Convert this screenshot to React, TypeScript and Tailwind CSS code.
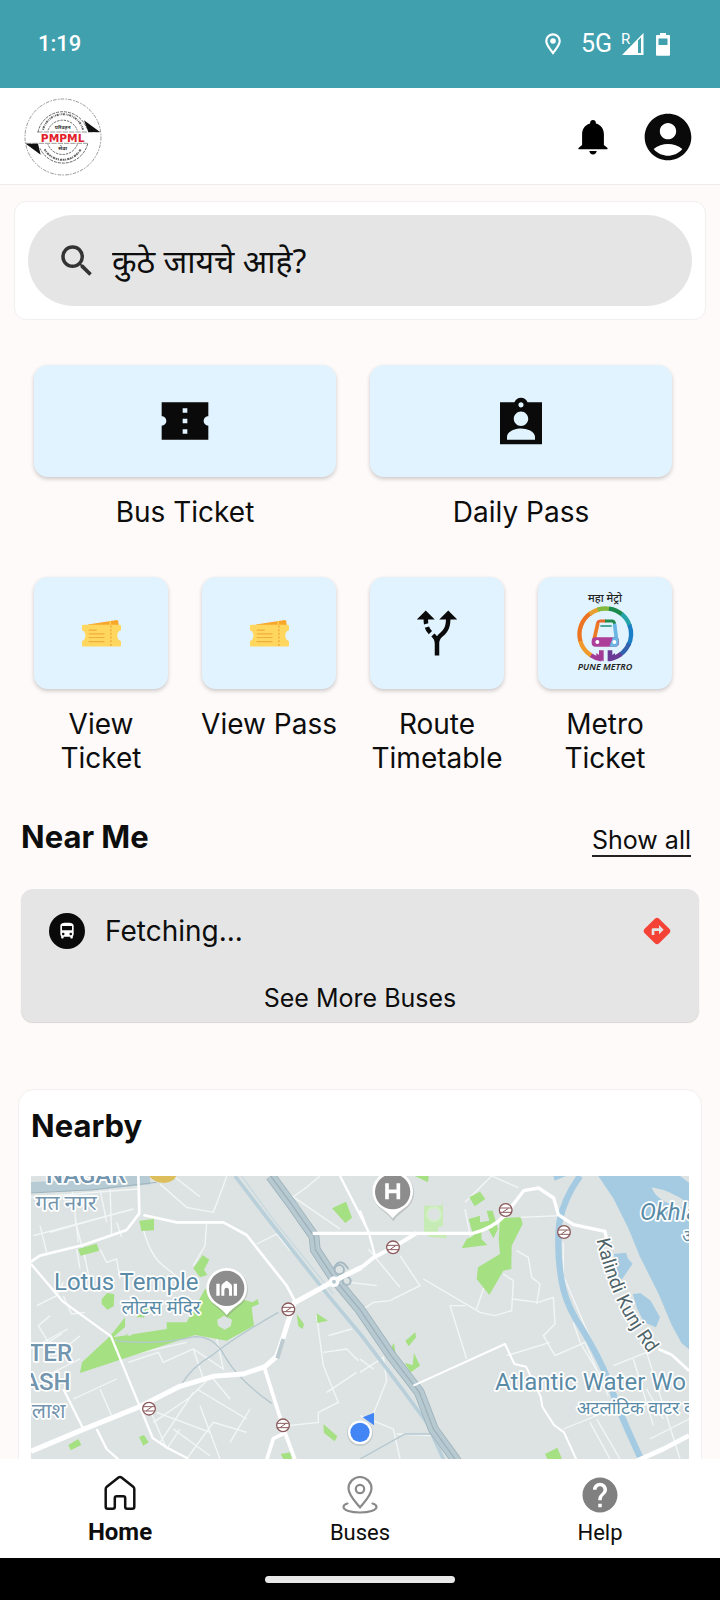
import React from 'react';
import { MdAccountCircle, MdAltRoute, MdDirections, MdDirectionsBus, MdHelp, MdSearch } from 'react-icons/md';

const BusTicketIcon = () => (
  <svg viewBox="0 0 24 24" className="w-14 h-14" fill="#0a0a0a" aria-hidden="true">
    <path d="M22 10V4H2v6c1.1 0 2 .9 2 2s-.9 2-2 2v6h20v-6c-1.1 0-2-.9-2-2s.9-2 2-2zm-9 7.5h-2v-2h2v2zm0-4.5h-2v-2h2v2zm0-4.5h-2v-2h2v2z" />
  </svg>
);

const DailyPassIcon = () => (
  <svg viewBox="0 -1 24 24" className="w-14 h-14" fill="#0a0a0a" aria-hidden="true">
    <path
      fillRule="evenodd"
      d="M21 3h-6.180C14.400 1.840 13.300 1 12 1s-2.400.840-2.820 2H3v18h18V3zm-9 0c.600 0 1.100.5 1.100 1.100S12.600 5.200 12 5.200s-1.100-.5-1.100-1.100S11.400 3 12 3zm0 3.900c1.700 0 3.100 1.400 3.100 3.100s-1.400 3.100-3.100 3.100-3.100-1.400-3.100-3.100 1.400-3.100 3.100-3.100zM12 14.200c-2.500 0-6 1.200-6 3.600V19h12v-1.200c0-2.400-3.500-3.600-6-3.600z"
    />
  </svg>
);

const YellowTicketIcon = () => (
  <svg viewBox="0 0 116 80" className="w-[39px] h-[27px]" aria-hidden="true">
    <path d="M18 13 L104 0 Q108 0 108 5 L109 15 L18 15z" fill="#f9a62b" />
    <path d="M84 2v12" stroke="#ffd75e" strokeWidth="4" />
    <path
      d="M4 14h108q4 0 4 4v12q-11 3-11 16t11 16v13q0 4-4 4H4q-4 0-4-4V62q10-3 10-16T0 30V18q0-4 4-4z"
      fill="#ffd75e"
    />
    <path d="M20 30h24M20 41h47M20 52h47M20 64h47" stroke="#efae3c" strokeWidth="3.5" />
    <path d="M86 16v63" stroke="#ef9f35" strokeWidth="3.5" strokeDasharray="6 5" />
  </svg>
);

const PuneMetroLogo = () => (
  <svg viewBox="0 0 168 240" className="w-14 h-20 overflow-visible" role="img" aria-label="Pune Metro">
    <text x="84" y="28" textAnchor="middle" fontSize="33" fontStyle="italic" fontWeight="500" fill="#222" className="font-['Noto_Sans',sans-serif]">
      महा मेट्रो
    </text>
    <g fill="none" strokeWidth="13">
      <path d="M74 199A77 77 0 0 1 40 186" stroke="#a33a96" />
      <path d="M42 187A77 77 0 0 1 9 141" stroke="#f09a2b" />
      <path d="M10 144A77 77 0 0 1 42 60" stroke="#ec7423" />
      <path d="M38 63A77 77 0 0 1 66 49" stroke="#e9a02e" />
      <path d="M62 50A77 77 0 0 1 100 48" stroke="#83b93c" />
      <path d="M96 47A77 77 0 0 1 137 66" stroke="#1d8a4e" />
      <path d="M134 63A77 77 0 0 1 158 98" stroke="#25a3a8" />
      <path d="M157 95A77 77 0 0 1 154 157" stroke="#1a7fc4" />
      <path d="M156 151A77 77 0 0 1 128 186" stroke="#3262ae" />
      <path d="M132 183A77 77 0 0 1 94 199" stroke="#6b3a97" />
    </g>
    <path d="M80 205V172H66V186L58 180V196z" fill="#a33a96" />
    <path d="M92 205V172H106V186L114 180V196z" fill="#6b3a97" />
    <path d="M62 93 L51 141" stroke="#ec7a25" strokeWidth="11" strokeLinecap="round" fill="none" />
    <path d="M113 95 L119 143" stroke="#69b5e3" strokeWidth="11" strokeLinecap="round" fill="none" />
    <path d="M61 90q3-6 9-6h17" stroke="#e9672b" strokeWidth="9" fill="none" />
    <path d="M84 84h22q5 0 7 8" stroke="#218b4c" strokeWidth="9" fill="none" />
    <path d="M70 99h34" stroke="#2f9a87" strokeWidth="5" />
    <rect x="44" y="133" width="82" height="28" rx="12" fill="#ad3f9b" />
    <path d="M97 161l11-28h10q8 0 7 16-1 12-11 12z" fill="#69b5e3" />
    <circle cx="61" cy="147" r="6" fill="#fff" />
    <circle cx="112" cy="147" r="6" fill="#fff" />
    <text x="84" y="230" textAnchor="middle" fontSize="27" fontStyle="italic" fontWeight="600" fill="#222" className="font-['Noto_Sans',sans-serif]">
      PUNE METRO
    </text>
  </svg>
);

const PmpmlLogo = () => (
  <svg viewBox="0 0 234 234" className="w-[78px] h-[78px]" role="img" aria-label="PMPML">
    <g fill="none" stroke="#666">
      <circle cx="117" cy="117" r="114" strokeWidth="2" strokeDasharray="11 4 5 3" />
      <path d="M42 103A76 76 0 0 1 188 91M191 137A76 76 0 0 1 48 151" strokeWidth="3" strokeDasharray="9 3" />
      <path d="M72 97A47 47 0 0 1 160 97M160 139A47 47 0 0 1 72 139" strokeWidth="3" strokeDasharray="7 3" />
      <path d="M57 95A62 62 0 0 1 177 95" strokeWidth="6" strokeDasharray="3 2 6 3 2 3" />
      <path d="M62 154A62 62 0 0 0 170 154" strokeWidth="6" strokeDasharray="5 2 3 3 7 2" />
      <path d="M40 102h188M6 136h185" strokeWidth="2" strokeDasharray="16 3" />
    </g>
    <path d="M180 67l48 35h-35z" fill="#111" />
    <path d="M5 137h37l8 33z" fill="#111" />
    <text x="116" y="93" textAnchor="middle" fontSize="15" fontWeight="700" fill="#333" className="font-['Noto_Sans',sans-serif]">
      परिवहन
    </text>
    <text x="116" y="131" textAnchor="middle" fontSize="32" fontWeight="700" fill="#e3202b" className="font-['DejaVu_Sans',sans-serif]">
      PMPML
    </text>
    <text x="116" y="156" textAnchor="middle" fontSize="16" fontWeight="700" fill="#333" className="font-['Noto_Sans',sans-serif]">
      सेवा
    </text>
  </svg>
);

const BellIcon = () => (
  <svg viewBox="0 0 30 36" className="w-[30px] h-9" fill="#000" aria-hidden="true">
    <path d="M15 1c1.700 0 2.900 1.200 2.900 2.900v.7c4.800 1.200 8 5.400 8 10.800V26l3.300 2.700c.8.700.5 1.600-.4 1.600H1.200c-.9 0-1.200-.9-.4-1.600L4.100 26V15.400c0-5.400 3.200-9.600 8-10.800v-.7C12.100 2.200 13.300 1 15 1z" />
    <path d="M11.300 32h7.400c-.2 2-1.700 3.400-3.700 3.400S11.500 34 11.300 32z" />
  </svg>
);

const HomeIcon = () => (
  <svg viewBox="0 0 32 36" className="w-8 h-9" fill="none" stroke="#111" strokeWidth="2.5" strokeLinejoin="round" aria-hidden="true">
    <path d="M14.500 2.600 2.800 11.800q-1.100.9-1.100 2.300v17.600q0 2 2 2h5.100q2 0 2-2v-8.500q0-2 2-2h6.400q2 0 2 2v8.500q0 2 2 2h5.100q2 0 2-2V14.100q0-1.400-1.100-2.300L17.500 2.600q-1.500-1.200-3 0z" />
  </svg>
);

const BusesIcon = () => (
  <svg viewBox="0 0 36 38" className="w-9 h-[38px]" fill="none" stroke="#8a8a8a" strokeWidth="2.2" strokeLinecap="round" strokeLinejoin="round" aria-hidden="true">
    <path d="M18 31.500C13.500 26 6.500 19 6.500 12.500a11.500 11.500 0 0 1 23 0c0 6.500-7 13.500-11.500 19z" />
    <circle cx="18" cy="13" r="4.2" />
    <path d="M5.500 27.500C3 28 1.500 29.600 1.500 31c0 3.200 7.500 5.500 16.500 5.500s16.500-2.300 16.500-5.500c0-1.400-1.500-3-4-3.500" />
  </svg>
);

// Metro stations on the map
const stations = [
  [865, 721], [447, 1019], [849, 1069], [1179, 535], [1517, 423], [1692, 489],
];

const parks = [
  '418,455 462,450 462,484 424,486', '234,540 290,524 298,545 242,560',
  '305,690 322,672 343,676 341,712 322,722 305,705',
  '580,598 608,558 628,572 612,602 622,618 600,625',
  '996,418 1038,398 1056,446 1036,462', '890,735 912,765 908,780 895,772',
  '950,733 984,755 952,762', '205,1128 235,1110 244,1128 212,1144',
  '417,1104 432,1098 446,1120 430,1130', '970,1065 1012,1102 1004,1117 972,1092',
  '842,1155 870,1150 876,1170 850,1170', '1245,321 1286,321 1284,340',
  '1408,385 1440,368 1456,390 1424,412', '1406,450 1440,440 1440,460 1468,455 1460,425 1478,425 1494,480 1480,508 1465,480 1445,480 1444,510 1462,528 1385,538 1400,510 1420,500',
  '1216,815 1246,790 1248,805 1226,832', '1170,840 1182,822 1188,862',
  '1214,882 1238,888 1242,852 1260,890 1232,910', '1635,1155 1672,1136 1690,1180 1645,1175',
  '340,805 500,780 500,760 560,760 615,660 758,700 772,690 777,705 755,715 762,770 680,815 585,798 520,820 240,912 246,880 330,802 375,745 380,800 405,790 460,700',
  '1500,447 1562,445 1568,465 1535,530 1534,600 1510,605 1468,678 1430,630 1434,595 1500,555 1496,510',
];

const sideStreets = [
  'M120 470l20 80M150 490l210-60M215 350l20 170M300 360l20 100M330 350l5 150M93 385l320-25M350 460l15 45M225 450l30 120M240 600l-10 -60M250 540l20 100M300 540l20 40 30-10 10 60M100 500l300-80',
  'M430 480q20 80 60 110l50 40M620 460l-5 70-35 60M480 345l80 70 80 15 30-80 10-29M520 321l80 62M770 525l60-30 40 50M870 390l50-35 40-34M860 370l160 110',
  'M150 740l-35 30 30 50 40-25M190 640l-20 40-60 30M190 680l25 55 40-5M93 840l110-60M240 800l-60 50M240 870l-100 50',
  'M380 860l180-40M385 880l90-30 15 30 90-40 30 90M580 840l90 60-20-90M350 930l-130 60M300 960l35 80M440 1000l60 140M460 1060l110-75 50-50M480 1120l100-150M520 1080l110 80M560 1170l80-110 100 30M590 960l150 90M640 930l50 60M600 1010l60 160M750 1020l-60 100M470 1030l160 60M500 1140l40-60',
  'M950 740l20 150 45 110-60 30v30l-90 10M970 850l70-10 35 35M980 970l90-60M985 800l70-20',
  'M1105 540l95 115M1200 560l60 90-90 45-50 5-30 20M1270 630l170 100 45 10 50-15 5-90-30-20M1350 710l50 160M1350 710h45M1395 420l20 100M1395 400l80-79 80 35M1550 545l35 20 10 60 25 20-10 60M1535 690l80 10 45-15 5 80-35 35 35 60 90-40 70 160M1430 720l20-60 35-30M1560 445l120-5',
  'M1690 520v100l60 140 110 260 70 150M1720 760l20 60 60 100M1520 860l130-40M1840 890l100-40 100 320M1900 870l60 200M1690 1080l150-60M1770 1060l60 110M1790 1050l70 120M1990 1050l-50-90M1950 1110l117-60',
  'M1080 910l70-45 10 70-40 100M1080 1040l100 40 20 90M1080 870l40 30M1190 1095l110 5M1050 640l80 10',
];

const MapPin = ({ x, y, children }: { x: number; y: number; children: React.ReactNode }) => (
  <g transform={`translate(${x} ${y})`}>
    <path d="M0 84C-10 68-26 58-44 42A62 62 0 1 1 44 42C26 58 10 68 0 84z" fill="#8b8b8b" opacity=".35" transform="translate(2 5)" />
    <path d="M0 80C-10 66-26 56-44 42A61 61 0 1 1 44 42C26 56 10 66 0 80z" fill="#fff" />
    <circle r="53" fill="#8d8d8d" />
    {children}
  </g>
);

const NearbyMap = () => (
  <svg viewBox="93 321 1974 900" preserveAspectRatio="xMidYMin slice" className="block w-full h-[300px] bg-[#dde3e3]" role="img" aria-label="Map of nearby places">
    <g fill="none" stroke="#f3f6f6" strokeWidth="4">
      {sideStreets.map(d => <path key={d} d={d} />)}
    </g>
    <g fill="#a5e082">
      {parks.map(points => <polygon key={points} points={points} />)}
    </g>
    <path d="M1272 410h52l5-10v70l-15 5v20h-42zM1285 490h54v18l-54-5z" fill="#c6ebb4" />
    <circle cx="1302" cy="436" r="21" fill="#dde3e3" stroke="#d3efc5" strokeWidth="6" />
    <path d="M375 745l55 0 8 25-50 32-12-12z" fill="#dde3e3" />
    <path d="M652 752l20-12 24 12-4 20-18 10-20-12z" fill="#dde3e3" />

    {/* Water */}
    <g fill="#a5cbe2">
      <path d="M1795 321h245l27 20v500l-22-18-30-55-40-95-55-110-35-85-45-90z" />
      <path d="M1660 321h38l-34 14zM1842 555l36-4 6 18 14 15-33 48-16-18zM1898 675l24-2 30 22 28 50-12 30-36-15-20-40z" />
      <path d="M1740 321q-50 70-62 140-10 100 12 200 15 60 60 125 70 120 90 190 20 60 95 220" fill="none" stroke="#a5cbe2" strokeWidth="19" />
    </g>
    <path d="M1955 355q60 10 112 50v14q-40-5-75-22-30-18-37-42z" fill="#dde3e3" />

    {/* Railway and expressway */}
    <g fill="none">
      <path d="M93 355 280 348 450 330" stroke="#b7cbd4" strokeWidth="32" />
      <path d="M93 372 280 362 470 340" stroke="#9fb4be" strokeWidth="3" />
      <path d="M705 321 800 445 985 680 1085 800 1210 965 1280 1060 1330 1170 1350 1221" stroke="#b9d0db" strokeWidth="11" />
      <path d="M725 321 815 445 1000 675" stroke="#c9d9e0" strokeWidth="4" />
      <path d="M345 815q120 15 240-12 60 0 90 60 40 70 140 140M545 945q30-50 90-85 60-50 200-130M1080 1170l135-75 80 0" stroke="#b5c7cf" strokeWidth="4" />
      <path d="M812 321 872 402 942 502 946 542 1002 628 1080 722 1175 862 1258 970 1300 1080 1365 1170 1395 1221" stroke="#9db0b9" strokeWidth="32" />
      <path d="M812 321 872 402 942 502 946 542 1002 628 1080 722 1175 862 1258 970 1300 1080 1365 1170 1395 1221" stroke="#b8cad1" strokeWidth="27" />
      <path d="M812 321 872 402 942 502 946 542 1002 628 1080 722 1175 862 1258 970 1300 1080 1365 1170 1395 1221" stroke="#9fb2bb" strokeWidth="4" />
      <g stroke="#a7bac3" strokeWidth="6">
        <circle cx="1018" cy="602" r="14" />
        <circle cx="1040" cy="636" r="12" />
        <path d="M1000 600q20-40 45 0M975 650l-25 20" />
      </g>
    </g>

    {/* Main roads */}
    <g fill="none" stroke="#fff" strokeLinejoin="round">
      <path d="M93 1147 250 1081 412 1016 540 952 640 922 730 915 795 893 830 862 848 810 882 702 1002 636 1085 595" strokeWidth="15" />
      <path d="M1085 595 1120 566 1185 532 1250 492" strokeWidth="12" />
      <path d="M850 810 832 868" stroke="#bccbd0" strokeWidth="12" />
      <path d="M938 493h480q60-15 95-52l58-76 45-8 45 30 14 50 45 30 95 20 5 25" strokeWidth="10" />
      <path d="M415 321l3 112-38 50-130 45-130 32-27 18M430 438l100 22h140l70 38 120 152 24 45" strokeWidth="8" />
      <path d="M93 585l95 112 145 105 80 195 45 110 45 30 62 32M190 960l60 120M290 1080l30 60 45 40" strokeWidth="7" />
      <path d="M793 895l58 185 35 95M852 1093l-32 16-22 70" strokeWidth="11" />
      <path d="M1020 321l85 165 20 75M1080 425l25 65" strokeWidth="7" />
      <path d="M1240 950l275-125 28 60 35 8 44 90 5 30 35 55 30 22 50 110" strokeWidth="6" />
      <path d="M1975 840l40 17 52 48" strokeWidth="8" />
      <path d="M1900 1180l90-40 77-40" strokeWidth="14" />
    </g>
    <circle cx="1002" cy="638" r="16" fill="#fff" />
    <circle cx="1002" cy="638" r="6" fill="#b8cad1" />

    {stations.map(([x, y]) => (
      <g key={`${x}-${y}`} transform={`translate(${x} ${y})`} fill="none" stroke="#8b5a5c" strokeWidth="3">
        <circle r="19" fill="#fff" strokeWidth="4" />
        <path d="M-18-6H17M-17 7H18M8-5L-8 6" />
      </g>
    ))}

    <path d="M447 321h82q-8 18-38 21-30-3-44-21z" fill="#dcbf5c" />

    <MapPin x={1178} y={368}>
      <path d="M-17-25V23M17-25V23M-17-1H17" stroke="#fff" strokeWidth="11" />
    </MapPin>
    <MapPin x={680} y={658}>
      <path d="M-31-14h10v36h-10zM21-14h10v36H21zM-16-5Q-16-13-6-18 0-28 6-18 16-13 16-5V22H7V7Q7-2 0-2T-7 7V22h-9z" fill="#fff" />
    </MapPin>

    {/* Current location */}
    <path d="M1088 1045l34-14v38z" fill="#4285f4" />
    <circle cx="1080" cy="1092" r="39" fill="#aab3b5" opacity=".5" />
    <circle cx="1080" cy="1090" r="36" fill="#fff" />
    <circle cx="1080" cy="1090" r="29" fill="#4285f4" />

    <g
      className="font-[Roboto,'Noto_Sans',sans-serif]"
      fill="#5a8ba6"
      stroke="#fff"
      strokeWidth="10"
      strokeLinejoin="round"
      paintOrder="stroke"
    >
      <g fill="#7395ae">
        <text x="138" y="341" fontSize="72" fontWeight="500">NAGAR</text>
        <text x="290" y="424" fontSize="63" textAnchor="end">गत नगर</text>
        <text x="216" y="877" fontSize="72" fontWeight="500" textAnchor="end">TER</text>
        <text x="212" y="962" fontSize="72" fontWeight="500" textAnchor="end">ASH</text>
        <text x="197" y="1048" fontSize="63" textAnchor="end">लाश</text>
      </g>
      <text x="162" y="662" fontSize="72">Lotus Temple</text>
      <text x="602" y="734" fontSize="57" textAnchor="end">लोटस मंदिर</text>
      <text x="1485" y="964" fontSize="72">Atlantic Water Wo</text>
      <text x="1730" y="1034" fontSize="54">अटलांटिक वाटर व</text>
      <text x="1920" y="453" fontSize="72" fontStyle="italic">Okhla</text>
      <text x="2046" y="520" fontSize="54" fontStyle="italic">ओ</text>
      <path id="kalindi" d="M1790 512Q1808 600 1848 690T1990 910" fill="none" stroke="none" />
      <text fontSize="57" fill="#4f6469">
        <textPath href="#kalindi">Kalindi Kunj Rd</textPath>
      </text>
    </g>
  </svg>
);

const mainServices = [
  { name: 'Bus Ticket', icon: <BusTicketIcon /> },
  { name: 'Daily Pass', icon: <DailyPassIcon /> },
];

const services = [
  { name: 'View Ticket', icon: <YellowTicketIcon /> },
  { name: 'View Pass', icon: <YellowTicketIcon /> },
  { name: 'Route Timetable', icon: <MdAltRoute className="w-[54px] h-[54px] text-[#0a0a0a]" /> },
  { name: 'Metro Ticket', icon: <PuneMetroLogo /> },
];

const ServiceTile = ({ name, icon }: { name: string; icon: React.ReactNode }) => (
  <button className="flex flex-col items-center">
    <span className="self-stretch mx-[17px] h-28 flex items-center justify-center rounded-[14px] bg-[#e1f3fe] shadow-[0_2px_4px_rgba(0,0,0,0.2)]">
      {icon}
    </span>
    <span className="mt-[18px] px-3 text-[28px] leading-[34px]">{name}</span>
  </button>
);

const StatusBar = () => (
  <div className="h-[88px] shrink-0 bg-[#40a0ae] text-white flex items-center justify-between pl-[38px] pr-[50px]">
    <span className="font-[Roboto,sans-serif] text-[22px] leading-8 font-medium">1:19</span>
    <div className="flex items-center">
      <svg viewBox="0 0 16 22" className="w-4 h-[22px]" aria-hidden="true">
        <path d="M8 20C5 16 1.300 12 1.300 8a6.700 6.700 0 0 1 13.400 0c0 4-3.700 8-6.700 12z" fill="none" stroke="#fff" strokeWidth="2.2" />
        <circle cx="8" cy="8" r="2.8" fill="#fff" />
      </svg>
      <span className="ml-5 font-[Roboto,sans-serif] text-[25px] leading-8">5G</span>
      <svg viewBox="0 0 24 24" className="ml-2 w-6 h-6 overflow-visible" aria-hidden="true">
        <path fillRule="evenodd" d="M23.500 1v22H2zM18 8.500V21h3V5.500z" fill="#fff" />
        <text x="1" y="12" fontSize="15" fill="#fff" stroke="#40a0ae" strokeWidth="1" paintOrder="stroke" className="font-[Roboto,sans-serif]">R</text>
      </svg>
      <svg viewBox="0 0 14 24" className="ml-3 w-3.5 h-6" aria-hidden="true">
        <path fillRule="evenodd" d="M4 1h6v2h3q1 0 1 1v19q0 .8-1 .8H1q-1 0-1-.8V4q0-1 1-1h3zM2.500 6.500V13h9V6.500z" fill="#fff" />
      </svg>
    </div>
  </div>
);

export default function App() {
  return (
    <div className="h-screen flex flex-col bg-[#fefaf9] text-[#0d0d0d] font-[Inter,'Noto_Sans',sans-serif]">
      <StatusBar />

      <header className="h-[97px] shrink-0 bg-white border-b border-[#ececec] pt-0.5 px-6 flex items-center justify-between">
        <PmpmlLogo />
        <div className="flex items-center gap-8">
          <button aria-label="Notifications">
            <BellIcon />
          </button>
          <button aria-label="Profile">
            <MdAccountCircle className="w-14 h-14 text-[#0a0a0a]" />
          </button>
        </div>
      </header>

      <main className="flex-1 min-h-0 overflow-y-auto [scrollbar-width:none]">
        {/* Search */}
        <div className="mx-[14px] mt-4 p-[13px] rounded-xl bg-white border border-[#f1efef]">
          <label className="h-[91px] flex items-center rounded-full bg-[#e5e5e5] pl-7 pr-8">
            <MdSearch className="w-[42px] h-[42px] shrink-0 text-[#333]" />
            <input
              type="text"
              aria-label="Search destination"
              placeholder="कुठे जायचे आहे?"
              className="ml-3.5 flex-1 min-w-0 bg-transparent outline-none font-['Noto_Sans',sans-serif] text-[32px] leading-[48px] placeholder:text-[#0d0d0d] placeholder:opacity-100"
            />
          </label>
        </div>

        {/* Services */}
        <div className="mt-[45px] ml-[17px] mr-[31px] grid grid-cols-2">
          {mainServices.map(service => (
            <ServiceTile key={service.name} {...service} />
          ))}
        </div>
        <div className="mt-12 ml-[17px] mr-[31px] grid grid-cols-4 items-start">
          {services.map(service => (
            <ServiceTile key={service.name} {...service} />
          ))}
        </div>

        {/* Near Me */}
        <section className="mt-[42px] px-[21px]">
          <div className="flex items-end justify-between pr-2">
            <h2 className="text-[31px] leading-10 font-bold">Near Me</h2>
            <a href="#" className="border-b-2 border-[#222] text-[25px] leading-[30px]">Show all</a>
          </div>
          <div className="mt-8 pt-6 pb-[7px] rounded-xl bg-[#e5e5e5] shadow-[0_1px_1px_rgba(0,0,0,0.15)]">
            <div className="flex items-center pl-7 pr-[26px]">
              <span className="w-9 h-9 rounded-full bg-[#0a0a0a] flex items-center justify-center">
                <MdDirectionsBus className="w-5 h-5 text-white" />
              </span>
              <span className="ml-5 flex-1 text-[28px] leading-9">Fetching...</span>
              <MdDirections className="w-8 h-8 text-[#f44336]" />
            </div>
            <button className="mt-8 block w-full text-center text-[25px] leading-[34px]">See More Buses</button>
          </div>
        </section>

        {/* Nearby */}
        <section className="mt-[67px] mx-[18px] px-3 pt-4 pb-3 rounded-2xl bg-white border border-[#f1efef]">
          <h2 className="text-[31px] leading-10 font-bold">Nearby</h2>
          <div className="mt-[30px]">
            <NearbyMap />
          </div>
        </section>
      </main>

      <nav className="h-[99px] shrink-0 bg-white grid grid-cols-3 font-[Roboto,sans-serif]">
        <a href="#" className="flex flex-col items-center pt-4">
          <HomeIcon />
          <span className="mt-1.5 text-[24px] leading-[30px] font-bold">Home</span>
        </a>
        <a href="#" className="flex flex-col items-center pt-[17px]">
          <BusesIcon />
          <span className="mt-1 text-[22px] leading-[30px]">Buses</span>
        </a>
        <a href="#" className="flex flex-col items-center pt-[17px]">
          <MdHelp className="w-[42px] h-[42px] -my-0.5 text-[#808080]" />
          <span className="mt-1 text-[22px] leading-[30px]">Help</span>
        </a>
      </nav>

      <div className="h-[42px] shrink-0 bg-black flex items-center justify-center">
        <div className="w-[190px] h-[7px] rounded-full bg-[#e8e8e8]" />
      </div>
    </div>
  );
}
